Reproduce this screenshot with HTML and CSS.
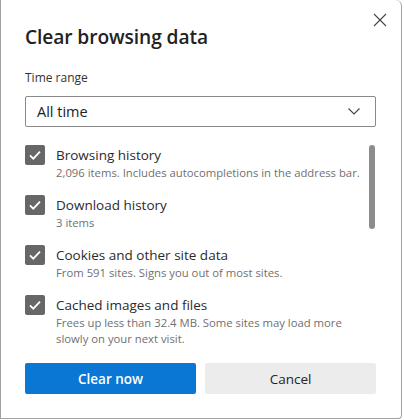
FILE: index.html
```html
<!DOCTYPE html>
<html>
<head>
<meta charset="utf-8">
<link rel="stylesheet" href="styles.css">
</head>
<body>
<div class="dialog">
  <button class="close" aria-label="Close">
    <svg width="14" height="14" viewBox="0 0 14 14"><path d="M1 1L13 13M13 1L1 13" stroke="#444" stroke-width="1.1" fill="none"/></svg>
  </button>
  <h1 class="title">Clear browsing data</h1>
  <div class="field-label">Time range</div>
  <div class="select">
    <span>All time</span>
    <svg class="chev" width="12" height="7" viewBox="0 0 12 7"><path d="M0.5 0.5L6 6L11.5 0.5" stroke="#444" stroke-width="1.1" fill="none"/></svg>
  </div>
  <div class="list">
    <div class="item">
      <span class="cb"><svg width="20" height="20" viewBox="0 0 20 20"><path d="M5 10.3L8.3 13.6L15 6.6" stroke="#fff" stroke-width="1.8" fill="none"/></svg></span>
      <div class="text">
        <div class="name">Browsing history</div>
        <div class="desc">2,096 items. Includes autocompletions in the address bar.</div>
      </div>
    </div>
    <div class="item">
      <span class="cb"><svg width="20" height="20" viewBox="0 0 20 20"><path d="M5 10.3L8.3 13.6L15 6.6" stroke="#fff" stroke-width="1.8" fill="none"/></svg></span>
      <div class="text">
        <div class="name">Download history</div>
        <div class="desc">3 items</div>
      </div>
    </div>
    <div class="item">
      <span class="cb"><svg width="20" height="20" viewBox="0 0 20 20"><path d="M5 10.3L8.3 13.6L15 6.6" stroke="#fff" stroke-width="1.8" fill="none"/></svg></span>
      <div class="text">
        <div class="name">Cookies and other site data</div>
        <div class="desc">From 591 sites. Signs you out of most sites.</div>
      </div>
    </div>
    <div class="item">
      <span class="cb"><svg width="20" height="20" viewBox="0 0 20 20"><path d="M5 10.3L8.3 13.6L15 6.6" stroke="#fff" stroke-width="1.8" fill="none"/></svg></span>
      <div class="text">
        <div class="name">Cached images and files</div>
        <div class="desc narrow">Frees up less than 32.4 MB. Some sites may load more slowly on your next visit.</div>
      </div>
    </div>
    <div class="scrollbar"></div>
  </div>
  <div class="buttons">
    <button class="btn primary">Clear now</button>
    <button class="btn secondary">Cancel</button>
  </div>
</div>
</body>
</html>
```
FILE: styles.css
```css
* { box-sizing: border-box; }
html, body { margin: 0; padding: 0; background: #fff; }
body { font-family: "Open Sans", "Noto Sans", sans-serif; color: #202020; }

.dialog {
  position: relative;
  width: 402px;
  height: 419px;
  padding: 23px 25px 0 24px;
  border: 1px solid #a2a2a2;
  border-top: none;
  border-radius: 0 6px 4px 0;
  background: #fff;
}

.close {
  position: absolute;
  top: 12px;
  right: 13px;
  width: 16px;
  height: 16px;
  padding: 0;
  border: none;
  background: none;
  display: flex;
  align-items: center;
  justify-content: center;
}

.title {
  margin: 0;
  font-size: 19.2px;
  line-height: 28px;
  font-weight: 600;
  color: #222;
  letter-spacing: -0.1px;
}

.field-label {
  margin-top: 19px;
  font-size: 12px;
  line-height: 16px;
  color: #333;
}

.select {
  margin-top: 10px;
  height: 31px;
  border: 1px solid #8a8a8a;
  border-radius: 2px;
  display: flex;
  align-items: center;
  justify-content: space-between;
  padding: 0 15px 0 11px;
  font-size: 14.5px;
  color: #222;
}

.list {
  position: relative;
  margin-top: 18px;
  height: 201px;
  overflow: hidden;
  display: flex;
  flex-direction: column;
  gap: 14px;
}

.item {
  display: flex;
  gap: 11px;
}

.cb {
  flex: none;
  width: 20px;
  height: 20px;
  background: #676767;
  border-radius: 2px;
  display: flex;
}

.text { min-width: 0; }

.name {
  font-size: 13.5px;
  line-height: 20px;
  font-weight: 500;
  color: #2b2b2b;
}

.desc {
  font-size: 11.3px;
  line-height: 16px;
  color: #707070;
  white-space: nowrap;
}

.desc.narrow { white-space: normal; width: 300px; }

.scrollbar {
  position: absolute;
  top: 0;
  right: 1px;
  width: 6px;
  height: 84px;
  border-radius: 3px;
  background: #8c8c8c;
}

.buttons {
  margin-top: 17px;
  display: grid;
  grid-template-columns: 1fr 1fr;
  gap: 9px;
}

.btn {
  height: 31px;
  border: none;
  border-radius: 2px;
  font-family: inherit;
  font-size: 13.5px;
  font-weight: 600;
}

.primary { background: #0a77d4; color: #fff; }
.secondary { background: #ececec; color: #242424; font-weight: 400; }
```
